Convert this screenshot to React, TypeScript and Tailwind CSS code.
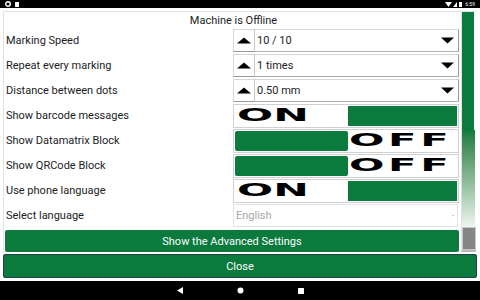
import React from "react";

function UpTri() {
  return (
    <svg width="14" height="7" viewBox="0 0 14 7">
      <polygon points="0,6.5 7,0.5 14,6.5" fill="#000" />
    </svg>
  );
}

function DownTri() {
  return (
    <svg width="13" height="7" viewBox="0 0 13 7">
      <polygon points="0,0.5 13,0.5 6.5,6.5" fill="#000" />
    </svg>
  );
}

function Label({ children }: { children: React.ReactNode }) {
  return <div className="w-[228px] pl-[1px] text-[11px] leading-none text-[#1c1c1c]">{children}</div>;
}

function SpinRow({ label, value }: { label: string; value: string }) {
  return (
    <div className="flex h-[25px] items-center">
      <Label>{label}</Label>
      <div className="flex h-[23px] w-[226px]">
        <div className="flex w-[22px] items-center justify-center border border-[#d6d6d6] border-b-[#9a9a9a] border-r-[#c8c8c8] bg-white">
          <UpTri />
        </div>
        <div className="flex flex-1 items-center border border-l-0 border-[#d6d6d6] border-b-[#b0b0b0] border-r-[#9a9a9a] bg-white pl-[2px] pr-[4px]">
          <span className="flex-1 text-[11px] leading-none text-[#1c1c1c]">{value}</span>
          <DownTri />
        </div>
      </div>
    </div>
  );
}

function OnWord() {
  return (
    <span
      className="inline-block origin-left scale-x-[2.5] text-[17px] font-bold leading-none text-black"
      style={{ fontFamily: '"DejaVu Sans", sans-serif' }}
    >
      ON
    </span>
  );
}

function OffWord() {
  return (
    <span
      className="inline-block origin-left scale-x-[2.45] text-[17px] font-bold leading-none tracking-[1.5px] text-black"
      style={{ fontFamily: '"DejaVu Sans", sans-serif' }}
    >
      OFF
    </span>
  );
}

function Toggle({ on }: { on: boolean }) {
  return (
    <div className="flex h-[24px] w-[226px] border border-[#d0d0d0] bg-white p-[1px]">
      {on ? (
        <>
          <div className="flex w-[113px] items-center overflow-hidden pl-[2px]">
            <OnWord />
          </div>
          <div className="flex-1 bg-[#0b7a3d]" />
        </>
      ) : (
        <>
          <div className="w-[113px] rounded-[2px] bg-[#0b7a3d]" />
          <div className="flex flex-1 items-center overflow-hidden pl-[1px]">
            <OffWord />
          </div>
        </>
      )}
    </div>
  );
}

function ToggleRow({ label, on }: { label: string; on: boolean }) {
  return (
    <div className="flex h-[25px] items-center">
      <Label>{label}</Label>
      <Toggle on={on} />
    </div>
  );
}

export default function App() {
  return (
    <div
      className="flex h-[300px] w-[480px] flex-col overflow-hidden bg-white"
      style={{ fontFamily: 'Roboto, "Noto Sans", sans-serif' }}
    >
      {/* status bar */}
      <div className="flex h-[8px] items-center bg-black px-[5px]">
        <svg width="6" height="6" viewBox="0 0 6 6">
          <circle cx="3" cy="3" r="2.3" fill="none" stroke="#fff" strokeWidth="1.4" />
        </svg>
        <div className="ml-[4px] h-[5px] w-[4px] bg-white" />
        <div className="flex-1" />
        <svg width="7" height="5" viewBox="0 0 7 5">
          <polygon points="0,0 7,0 3.5,5" fill="#fff" />
        </svg>
        <svg className="ml-[1px]" width="4" height="5" viewBox="0 0 4 5">
          <polygon points="0,5 4,0 4,5" fill="#fff" />
        </svg>
        <div className="ml-[2px] h-[5px] w-[3px] bg-white" />
        <span className="ml-[3px] text-[5px] leading-none text-white">6:59</span>
      </div>

      {/* dialog */}
      <div className="mx-[3px] mt-[3px] flex flex-col">
        <div className="flex h-[242px] border-l border-t border-[#e2e2e2]">
          <div className="w-[456px] pl-[1px]">
            <div className="flex h-[16px] items-center justify-center pl-[2px] text-[11px] leading-none text-[#1c1c1c]">
              Machine is Offline
            </div>
            <SpinRow label="Marking Speed" value="10 / 10" />
            <SpinRow label="Repeat every marking" value="1 times" />
            <SpinRow label="Distance between dots" value="0.50 mm" />
            <ToggleRow label="Show barcode messages" on={true} />
            <ToggleRow label="Show Datamatrix Block" on={false} />
            <ToggleRow label="Show QRCode Block" on={false} />
            <ToggleRow label="Use phone language" on={true} />
            <div className="flex h-[25px] items-center">
              <Label>Select language</Label>
              <div className="flex h-[23px] w-[225px] items-center border border-[#e4e4e4] bg-white pl-[2px] pr-[3px]">
                <span className="flex-1 text-[11px] leading-none text-[#a8a8a8]">English</span>
                <div className="h-[1px] w-[2px] bg-[#c8c8c8]" />
              </div>
            </div>
            <div className="mt-[2px] flex h-[22px] w-[454px] items-center justify-center rounded-[2px] bg-[#0b7a3d] text-[11px] leading-none text-white">
              Show the Advanced Settings
            </div>
          </div>
          {/* scrollbar */}
          <div className="ml-[1px] flex w-[15px] flex-col border-l border-[#e0e0e0] pb-[1px]">
            <div className="h-[118px] w-[12px] bg-[#0b7a3d]" />
            <div className="h-[97px] w-[13px] bg-gradient-to-b from-[#0b7a3d] to-[#eef6f0]" />
            <div className="h-[23px] w-[14px] border border-[#c8c8c8] bg-[#858585]" />
            <div className="h-[2px] w-[14px] bg-[#b8b8b8]" />
          </div>
        </div>
        <div className="mt-[1px] flex h-[24px] w-[474px] items-center justify-center rounded-[2px] border border-[#23404a] bg-[#0b7a3d] text-[11px] leading-none text-white">
          Close
        </div>
      </div>

      <div className="flex-1" />
      {/* nav bar */}
      <div className="flex h-[19px] items-center justify-center gap-[54px] bg-black">
        <svg width="6" height="7" viewBox="0 0 6 7">
          <polygon points="6,0 6,7 0,3.5" fill="#fff" />
        </svg>
        <svg width="7" height="7" viewBox="0 0 7 7">
          <circle cx="3.5" cy="3.5" r="3" fill="#fff" />
        </svg>
        <svg width="6" height="6" viewBox="0 0 6 6">
          <rect x="0" y="0" width="6" height="6" rx="0.5" fill="#fff" />
        </svg>
      </div>
    </div>
  );
}
